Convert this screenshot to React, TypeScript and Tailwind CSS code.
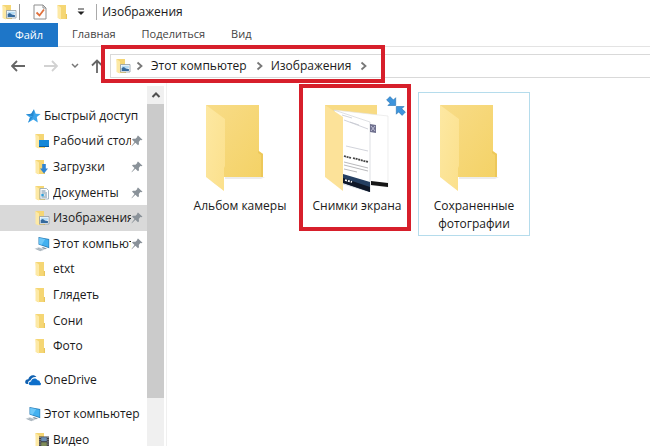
import { ReactNode } from "react";

interface NavItem {
  label: string;
  icon: ReactNode;
  pinned?: boolean;
  selected?: boolean;
}

interface IconProps {
  children?: ReactNode;
}

// Small 16px folder, children are drawn on top as a badge
function SmallFolder({ children }: IconProps) {
  return (
    <svg viewBox="0 0 16 16" className="w-4 h-4 shrink-0">
      <path d="M1.5 1h8.5v9.5l1 .7V15H3z" fill="#f5d674" />
      <path d="M1.5 1L5 3.4V15.5L1.5 14z" fill="#fde9a5" />
      <path d="M9.8 10h1.2v5H9.8z" fill="#e9c65c" />
      {children}
    </svg>
  );
}

function PictureBadge() {
  return (
    <g>
      <path d="M5.5 6.5h9.5v7.5H5.5z" fill="#fff" stroke="#8e9aa3" strokeWidth="0.8" />
      <path d="M6.6 7.6h7.3v2.6H6.6z" fill="#b6dcf5" />
      <path d="M6.6 13V10l2.2-1 2.2 1.5 2.9.5v2z" fill="#356a9e" />
    </g>
  );
}

function DocumentBadge() {
  return (
    <g>
      <path d="M6 3.5h6.5l2 2V14H6z" fill="#fff" stroke="#8fa5b5" strokeWidth="0.8" />
      <path d="M7.5 6h4M7.5 8h5.5M10.5 10H13M7.5 12H13" stroke="#6b8ba3" />
      <path d="M7.3 9h2.5v2.3H7.3z" fill="#2b9ed8" />
    </g>
  );
}

function VideoBadge() {
  return (
    <g>
      <path d="M5 4.5h10V15H5z" fill="#3b3c42" />
      <path d="M7.2 5.2h5.6v4H7.2z" fill="#6b8fb5" />
      <path d="M7.2 10.3h5.6v4H7.2z" fill="#7e8c58" />
      <path d="M6 5v10M14 5v10" stroke="#d6d6d6" strokeWidth="0.9" strokeDasharray="1 1.2" />
    </g>
  );
}

function ComputerIcon() {
  return (
    <svg viewBox="0 0 16 16" className="w-4 h-4 shrink-0">
      <path d="M4.5 1L15.2 3v9.2L4.5 8.5z" fill="#2c7fb8" />
      <path d="M5.2 1.9l9.3 1.8v7.4L5.2 8z" fill="#43b1f0" />
      <path d="M5.2 1.9l6 1.2-3.5 5.7L5.2 8z" fill="#6fc8f8" />
      <path d="M9 11l4 1.4-2 .8-3.6-1.3z" fill="#8b98a3" />
      <path d="M.5 12.8l4.3-1.6 6 2.2-4.3 1.9z" fill="#c3ccd3" />
      <path d="M2.5 13l4.3 1.6M4 12.3l4.4 1.6" stroke="#8f9ba5" strokeWidth="0.5" />
    </svg>
  );
}

function StarIcon() {
  return (
    <svg viewBox="0 0 16 16" className="w-4 h-4 shrink-0">
      <path
        d="M9 1.2l1.7 4.5 4.9.2-3.8 3.2 1 5.3-4.5-2.8-5.2 3.2 1.9-5.3L.9 6.6l5.3-.8z"
        fill="#3ba3ea"
      />
      <path d="M.9 6.6l5.3-.8L9 1.2l-.7 7.3zM5 9.5l3.3-1-5.2 6.3z" fill="#2587cf" />
    </svg>
  );
}

function OneDriveIcon() {
  return (
    <svg viewBox="0 0 16 16" className="w-4 h-4 shrink-0">
      <path
        d="M.2 10.4C0 8.500 1.600 7.200 3.300 7.300 3.800 4.300 7 2.200 9.900 3.700c.6.3 1.100.8 1.500 1.400-3-.6-5.200 1-5.800 3.200-1.900.2-3 1.900-2.400 3.800-1.600.1-2.900-.6-3-1.700z"
        fill="#1161b0"
      />
      <path
        d="M5.800 13.200c-2.800 0-2.800-3.400.3-3.700.2-3.200 4.900-4.400 6.500-1.200 1.700-.1 2.500 1 2.300 2.200 1.600.3 1.400 2.700-.2 2.700z"
        fill="#0d6fcb"
      />
    </svg>
  );
}

function PinIcon() {
  return (
    <svg viewBox="0 0 12 12" className="w-3 h-3 shrink-0">
      <path
        d="M7 .6l4.500 4.200-1.300.5-.9-.2-1.500 1.900.2 2.300-1 .9-2.600-2.500L.8 11.300.5 11l3-4L1 4.600l1-.9 2.500.1 1.800-1.700-.1-.9z"
        fill="#8a9299"
      />
    </svg>
  );
}

function Chevron() {
  return (
    <svg viewBox="0 0 8 10" className="w-2 h-[10px] shrink-0">
      <path d="M1.500 1.500L5.500 5l-4 3.500" fill="none" stroke="#777" strokeWidth="1.800" />
    </svg>
  );
}

function ArrowIcon({ color, flip }: { color: string; flip?: boolean }) {
  return (
    <svg viewBox="0 0 14 12" className="w-[14px] h-3">
      <path
        d={flip ? "M0 6h13M8 1l5 5-5 5" : "M14 6H1M6 1L1 6l5 5"}
        fill="none"
        stroke={color}
        strokeWidth="1.800"
      />
    </svg>
  );
}

function BigFolder() {
  return (
    <svg viewBox="0 0 60 88" className="w-[60px] h-[88px] mr-[10px]">
      <defs>
        <linearGradient id="back" x1="0" y1="0" x2="1" y2="1">
          <stop offset="0" stopColor="#f8dc88" />
          <stop offset="1" stopColor="#f4d266" />
        </linearGradient>
        <linearGradient id="front" x1="0" y1="0" x2="1" y2="1">
          <stop offset="0" stopColor="#fde8a2" />
          <stop offset="1" stopColor="#fbe08c" />
        </linearGradient>
      </defs>
      <path d="M20 73h40l-4 2H20zM6 77l12 5v4z" fill="#ececec" />
      <path d="M1 1h53v46l4 3v23H19L1 73z" fill="url(#back)" />
      <path d="M53 47l5 3v23h-2V51l-3-2z" fill="#edc85a" />
      <path d="M1 1l19 14v47l-1 2v23L1 73z" fill="url(#front)" />
    </svg>
  );
}

// Open folder with a preview of the screenshots inside
function PreviewFolder() {
  return (
    <svg viewBox="0 0 66 88" className="w-[66px] h-[88px]">
      <path d="M1 1h52v70H19L1 73z" fill="#f8db84" />
      <path d="M10 6l54 6v71l-18-2z" fill="#fff" stroke="#e3e3e3" strokeWidth="0.600" />
      <path d="M47 77l17 2v4l-17-2z" fill="#161616" />
      <path d="M10 6l36 12v70l-27-8z" fill="#fff" stroke="#c8cbd0" strokeWidth="0.600" />
      <path d="M46 20l6 1v8l-6-1z" fill="#70718f" />
      <path d="M47 22l4 5M51 22l-4 5" stroke="#cfcfe5" strokeWidth="0.800" />
      <path d="M18 11l10 3M26 18l9 3M20 16l24 9M22 42l22 5" stroke="#c5c8d0" strokeWidth="0.800" />
      <path d="M20 52l7 2M29 54l15 4" stroke="#444" strokeWidth="1.800" strokeDasharray="2 0.700" />
      <path d="M20 58l24 6M20 61l24 6M20 65l13 3" stroke="#a7a7ab" strokeWidth="0.800" />
      <path d="M19 70l27 8v10l-27-9z" fill="#253f61" />
      <path d="M19 74l27 9v5l-27-9z" fill="#0f1727" />
      <path d="M21 76l7 2" stroke="#fff" strokeWidth="1.800" strokeDasharray="2 1" />
      <path d="M1 1l18 12v74L1 73z" fill="#fce299" />
    </svg>
  );
}

function CompressedIcon() {
  return (
    <svg viewBox="0 0 20 20" className="w-5 h-5">
      <g fill="#3d94dc" stroke="#2872b0" strokeWidth="0.600">
        <path d="M4 .6l3.400 3.400L9.700 1.700v7.800H1.900l2.300-2.300L.6 4z" />
        <path d="M10.300 10.500h7.800l-2.300 2.300 3.600 3.300-3.300 3.300-3.500-3.500-2.300 2.300z" />
      </g>
    </svg>
  );
}

const quickAccess: NavItem[] = [
  {
    label: "Рабочий стол",
    pinned: true,
    icon: (
      <SmallFolder>
        <path d="M5 7h10v7H5z" fill="#1688d8" />
        <path d="M5 13h10v1H5z" fill="#0a5da0" />
      </SmallFolder>
    ),
  },
  {
    label: "Загрузки",
    pinned: true,
    icon: (
      <SmallFolder>
        <path d="M8.200 5h3.600v4.500H14L10 14.500 6 9.500h2.200z" fill="#2f84d3" />
      </SmallFolder>
    ),
  },
  { label: "Документы", pinned: true, icon: <SmallFolder><DocumentBadge /></SmallFolder> },
  {
    label: "Изображения",
    pinned: true,
    selected: true,
    icon: <SmallFolder><PictureBadge /></SmallFolder>,
  },
  { label: "Этот компьютер", pinned: true, icon: <ComputerIcon /> },
  { label: "etxt", icon: <SmallFolder /> },
  { label: "Глядеть", icon: <SmallFolder /> },
  { label: "Сони", icon: <SmallFolder /> },
  { label: "Фото", icon: <SmallFolder /> },
];

function NavRoot({ label, icon }: NavItem) {
  return (
    <button className="flex items-center w-full h-[26px] pl-[25px] gap-[3px] text-left whitespace-nowrap">
      {icon}
      <span>{label}</span>
    </button>
  );
}

function NavChild({ label, icon, pinned, selected }: NavItem) {
  return (
    <button
      className={
        "flex items-center w-full h-full min-h-[25px] pl-[34px] pr-[4px] text-left whitespace-nowrap " +
        (selected ? "bg-[#d9d9d9]" : "")
      }
    >
      {icon}
      <span className="flex-1 min-w-0 ml-[3px] overflow-hidden">{label}</span>
      {pinned && <PinIcon />}
    </button>
  );
}

function TitleBar() {
  return (
    <header className="flex items-center h-[23px] pl-px">
      <SmallFolder>
        <PictureBadge />
      </SmallFolder>
      <div className="w-px h-4 ml-[2px] bg-[#999]" />
      <button aria-label="Свойства" className="ml-[13px]">
        <svg viewBox="0 0 14 16" className="w-[14px] h-4">
          <path d="M1 1h9l3 3v11H1z" fill="#fdfdfd" stroke="#8f8f8f" />
          <path d="M10 1v3h3" fill="none" stroke="#8f8f8f" />
          <path d="M3.500 8.500l3 3 4.500-6" fill="none" stroke="#e0703c" strokeWidth="1.800" />
        </svg>
      </button>
      <button aria-label="Новая папка" className="ml-[9px]">
        <SmallFolder />
      </button>
      <button aria-label="Настройка панели" className="ml-[5px]">
        <svg viewBox="0 0 8 8" className="w-2 h-2">
          <path d="M1 1h6" stroke="#333" />
          <path d="M.5 3.500h7L4 7z" fill="#222" />
        </svg>
      </button>
      <div className="w-px h-4 ml-[11px] bg-[#aaa]" />
      <h1 className="ml-[5px] leading-5">Изображения</h1>
    </header>
  );
}

function Ribbon() {
  return (
    <nav className="flex h-6 text-[11px] text-[#444] border-b border-[#e3e3e3]">
      <button className="w-[58px] h-6 bg-[#1e76c8] text-white">Файл</button>
      <button className="ml-[14px]">Главная</button>
      <button className="ml-[26px]">Поделиться</button>
      <button className="ml-[26px]">Вид</button>
    </nav>
  );
}

function AddressBar() {
  return (
    <div className="flex items-center h-9 pl-[11px] pt-px">
      <button aria-label="Назад">
        <ArrowIcon color="#666" />
      </button>
      <button aria-label="Вперед" className="ml-[19px]">
        <ArrowIcon color="#d2d2d2" flip />
      </button>
      <button aria-label="Последние расположения" className="ml-[13px]">
        <svg viewBox="0 0 8 6" className="w-2 h-[6px]">
          <path d="M1 1l3 3 3-3" fill="none" stroke="#777" strokeWidth="1.500" />
        </svg>
      </button>
      <button aria-label="Вверх" className="ml-[11px]">
        <svg viewBox="0 0 14 14" className="w-[14px] h-[14px]">
          <path d="M7 14V1.500M2 6.500l5-5 5 5" fill="none" stroke="#666" strokeWidth="1.800" />
        </svg>
      </button>
      <div className="relative flex-1 flex items-center h-6 ml-[6px] pl-1 border border-r-0 border-[#d9d9d9]">
        <SmallFolder>
          <PictureBadge />
        </SmallFolder>
        <div className="ml-[5px]">
          <Chevron />
        </div>
        <button className="ml-[7px]">Этот компьютер</button>
        <div className="ml-[9px]">
          <Chevron />
        </div>
        <button className="ml-[7px]">Изображения</button>
        <div className="ml-[9px]">
          <Chevron />
        </div>
        <div className="absolute -left-[10px] -top-[10px] w-[284px] h-[38px] border-4 border-[#d71f2b] pointer-events-none" />
      </div>
    </div>
  );
}

function Sidebar() {
  return (
    <aside className="flex w-[164px] shrink-0 overflow-hidden">
      <div className="w-[147px] shrink-0 pt-5">
        <div className="grid grid-cols-1 auto-rows-fr h-[256px]">
          <NavRoot label="Быстрый доступ" icon={<StarIcon />} />
          {quickAccess.map((item) => (
            <NavChild key={item.label} {...item} />
          ))}
        </div>
        <div className="pt-2">
          <NavRoot label="OneDrive" icon={<OneDriveIcon />} />
        </div>
        <div className="pt-2">
          <NavRoot label="Этот компьютер" icon={<ComputerIcon />} />
          <NavChild label="Видео" icon={<SmallFolder><VideoBadge /></SmallFolder>} />
        </div>
      </div>
      {/* Scrollbar */}
      <div className="flex flex-col w-[17px] mt-[3px] bg-[#f0f0f0]">
        <button aria-label="Прокрутить вверх" className="flex justify-center items-center h-[18px]">
          <svg viewBox="0 0 10 8" className="w-[10px] h-2">
            <path d="M1.500 6L5 2.500 8.500 6" fill="none" stroke="#505050" strokeWidth="2" />
          </svg>
        </button>
        <div className="h-[294px] bg-[#cbcbcb]" />
      </div>
    </aside>
  );
}

function FolderTile({ label, focused, children }: { label: string; focused?: boolean; children: ReactNode }) {
  return (
    <button
      className={
        "relative flex flex-col items-center w-[112px] h-[144px] pt-[11px] border leading-[18px] " +
        (focused ? "border-[#b5dcec]" : "border-transparent")
      }
    >
      {children}
      <span className="px-2 pt-[5px]">{label}</span>
    </button>
  );
}

export default function App() {
  return (
    <div className="flex flex-col h-screen overflow-hidden bg-white text-[#1a1a1a] text-xs font-['Open_Sans','Noto_Sans',sans-serif]">
      <TitleBar />
      <Ribbon />
      <AddressBar />
      <div className="flex flex-1 min-h-0">
        <Sidebar />
        <main className="flex flex-1 items-start gap-[5px] ml-[2px] pl-[17px] pt-[9px] border-l border-[#f0f0f0]">
          <FolderTile label="Альбом камеры">
            <BigFolder />
          </FolderTile>
          <FolderTile label="Снимки экрана">
            <PreviewFolder />
            <div className="absolute right-[6px] top-[3px]">
              <CompressedIcon />
            </div>
            <div className="absolute -left-[3px] -top-[9px] w-[112px] h-[147px] border-4 border-[#d71f2b] pointer-events-none" />
          </FolderTile>
          <FolderTile label="Сохраненные фотографии" focused>
            <BigFolder />
          </FolderTile>
        </main>
      </div>
    </div>
  );
}
